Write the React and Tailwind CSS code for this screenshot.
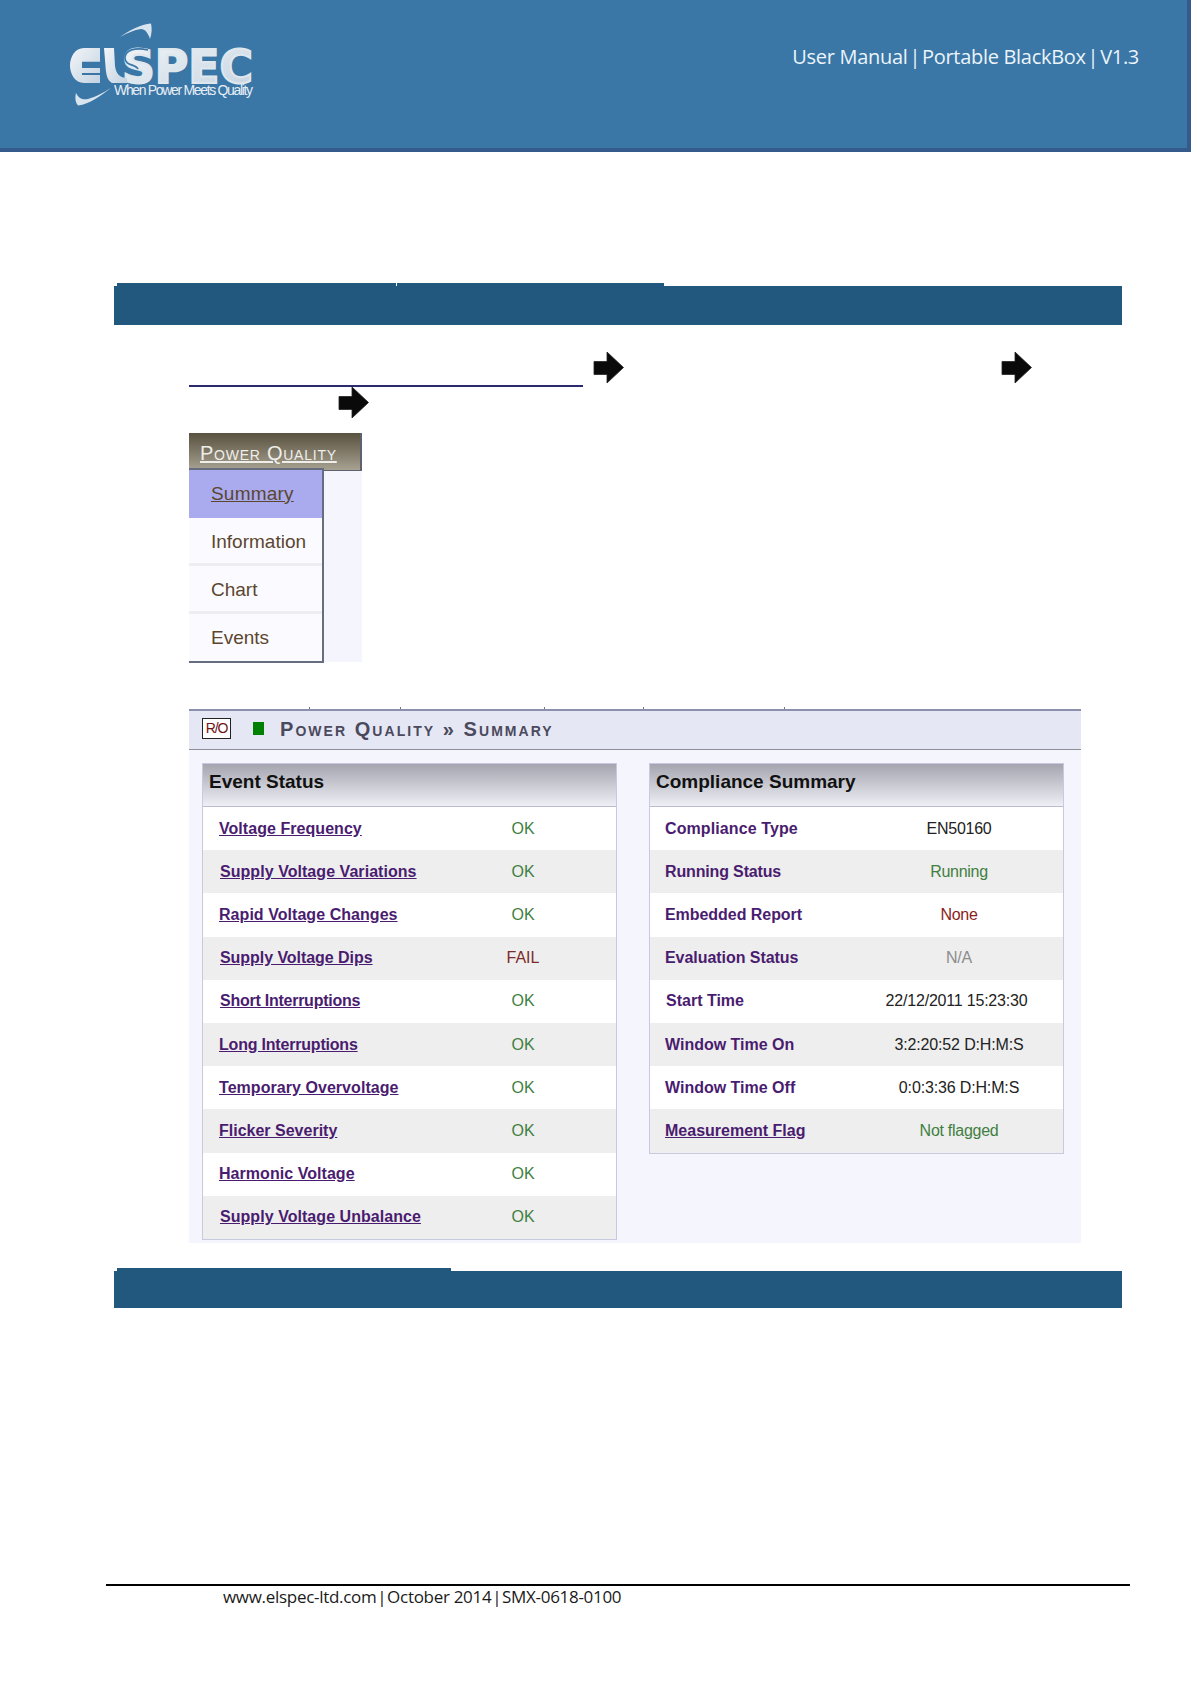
const sans = "font-['Liberation_Sans',Arial,sans-serif]";

const Arrow = ({ className = "" }) => (
  <svg viewBox="0 0 31 33" className={`w-[31px] h-[33px] shrink-0 ${className}`}>
    <path d="M1 10.5H14V1L30.5 16.5L14 32V23.5H1Z" fill="#0a0a0a" stroke="#222" strokeWidth="0.8" strokeLinejoin="round" />
  </svg>
);

const Logo = () => (
  <svg viewBox="68 22 190 88" className="w-[190px] h-[88px] shrink-0 overflow-visible">
    <defs>
      <linearGradient id="lg" x1="0" y1="0" x2="1" y2="1">
        <stop offset="0" stopColor="#f2f5f8" />
        <stop offset="1" stopColor="#c4d3e1" />
      </linearGradient>
    </defs>
    <path d="M120 37C128 31 141 24 151 23.5C152 28 152 33 150 39C148 33 145 29 141 29C134 30 127 33 120 37Z" fill="#d8e4ee" />
    <path d="M111 88C100 96 90 104 78 105.5C75 102 75 97 76 93C79 99 83 100 88 99C96 97 104 92 111 88Z" fill="#d8e4ee" />
    <path d="M100 48H84C75 48 70 57 70 65.5C70 74 75 83 84 83H100V75H82V73H100V68H82V63H100Z" fill="url(#lg)" />
    <path d="M82 62.5H100M82 74H100" stroke="#3a76a6" strokeWidth="1.5" />
    <text x="122" y="83" textLength="131" lengthAdjust="spacingAndGlyphs" fill="url(#lg)" stroke="#dfe7ee" strokeWidth="2" className="font-['DejaVu_Sans',sans-serif] font-bold text-[46px]">SPEC</text>
    <path d="M104 48H114L115 66C116 74 120 78 127 78V83H112C107 80 106 74 105.5 66Z" fill="url(#lg)" />
    <path d="M148 50C135 47 125 50 125 58C125 66 136 64 138 69" fill="none" stroke="#3a76a6" strokeWidth="1.6" />
    <text x="114" y="95" textLength="139" lengthAdjust="spacing" fill="#e6eef5" className={`${sans} text-[14px]`}>When Power Meets Quality</text>
  </svg>
);

const SectionBar = ({ stripWidth, nick, h, className = "" }) => (
  <div className={`ml-[114px] w-[1008px] ${className}`}>
    <div className="ml-[3px] h-[3px] bg-[#22577e] flex" style={{ width: stripWidth }}>
      {nick && <div className="ml-[279px] w-px bg-white" />}
    </div>
    <div className={`${h} bg-[#22577e]`} />
  </div>
);

const MenuItem = ({ label, active, last }) => (
  <div className={`pl-[22px] flex items-center text-[19px] text-[#5b4630] ${last ? "h-[47px] pt-[1px]" : "h-[48px]"} ${active ? "bg-[#aaaaee] underline tracking-[0.2px]" : ""} ${last || active ? "" : "border-b-[3px] border-[#eeeef2] pt-[3px]"}`}>
    {label}
  </div>
);

const event = [
  ["Voltage Frequency", "OK", 0, "tracking-[0.05px]"],
  ["Supply Voltage Variations", "OK", 1, "tracking-[0.05px]"],
  ["Rapid Voltage Changes", "OK", 0, "tracking-[0.05px]"],
  ["Supply Voltage Dips", "FAIL", 1, "tracking-[-0.05px]"],
  ["Short Interruptions", "OK", 1, "tracking-[-0.25px]"],
  ["Long Interruptions", "OK", 0, "tracking-[-0.2px]"],
  ["Temporary Overvoltage", "OK", 0, "tracking-[0.05px]"],
  ["Flicker Severity", "OK", 0, "tracking-normal"],
  ["Harmonic Voltage", "OK", 0, "tracking-[0.05px]"],
  ["Supply Voltage Unbalance", "OK", 1, "tracking-[0.05px]"],
];

const compliance = [
  ["Compliance Type", "EN50160", "text-[#222] tracking-[-0.28px]", false, 0, "tracking-[0.1px]"],
  ["Running Status", "Running", "text-[#3f7f3f] tracking-[-0.28px]", false, 0, "tracking-[-0.15px]"],
  ["Embedded Report", "None", "text-[#8a1c1c] tracking-[-0.28px]", false, 0, "tracking-[-0.05px]"],
  ["Evaluation Status", "N/A", "text-[#8c8c8c] tracking-[-0.28px]", false, 0, "tracking-[-0.05px]"],
  ["Start Time", "22/12/2011 15:23:30", "text-[#222] tracking-[-0.2px] pr-[5px]", false, 1, "tracking-normal"],
  ["Window Time On", "3:2:20:52 D:H:M:S", "text-[#222] tracking-[-0.15px]", false, 0, "tracking-normal"],
  ["Window Time Off", "0:0:3:36 D:H:M:S", "text-[#222] tracking-[-0.15px]", false, 0, "tracking-normal"],
  ["Measurement Flag", "Not flagged", "text-[#3f7f3f] tracking-[-0.28px]", true, 0, "tracking-normal"],
];

const Row = ({ i, label, value, valueClass, link, shift, labelW, pad, track }) => (
  <div className={`h-[43.2px] flex items-center text-[16px] ${i % 2 ? "bg-[#eeeeee]" : "bg-white"}`}>
    <div className={`${pad} shrink-0`} style={{ width: labelW }}>
      <span className={`font-bold text-[#4a1c70] ${track} ${link ? "underline" : ""}`} style={{ marginLeft: shift }}>{label}</span>
    </div>
    <div className={`w-[100px] flex justify-center ${valueClass}`}>
      <span className="shrink-0">{value}</span>
    </div>
  </div>
);

const Panel = ({ title, children }) => (
  <div className="w-[415px] border border-[#c6c9e0] self-start">
    <div className="h-[43px] pl-[6px] pb-[5px] flex items-center text-[19px] font-bold text-[#111] bg-gradient-to-b from-[#a4a5af] to-[#eff0f6] border-b border-[#b9bccf]">
      {title}
    </div>
    {children}
  </div>
);

export default function App() {
  return (
    <div className={`relative w-[1191px] h-[1684px] bg-white overflow-hidden flex flex-col ${sans}`}>
      <header className="h-[152px] shrink-0 bg-[#3a76a6] border-b-4 border-r-4 border-[#355b8c] flex justify-between pl-[68px] pr-[48px] pt-[22px]">
        <Logo />
        <div className="font-['Open_Sans',sans-serif] text-[20px] tracking-[-0.3px] text-[#eaf4fb] mt-[21px] leading-[28px] whitespace-pre">
          User Manual<span className="-mx-[3px]"> | </span>Portable BlackBox<span className="-mx-[3px]"> | </span>V1.3
        </div>
      </header>

      <SectionBar stripWidth={547} nick h="h-[39px]" className="mt-[131px]" />

      <div className="ml-[189px] mt-[26px]">
        <div className="flex">
          <div className="w-[394px] h-[36px] border-b-2 border-[#2a2a6e]" />
          <Arrow className="ml-[10px]" />
          <Arrow className="ml-[377px]" />
        </div>
        <Arrow className="ml-[149px] -mt-[1px]" />

        <div className="mt-[14px] w-[173px] h-[229px] bg-[#f5f5fd]">
          <div className="h-[38px] pl-[11px] pt-[5px] bg-gradient-to-b from-[#5a5240] to-[#a8a292] border-r-2 border-b border-[#5e6270] text-[#eeeeea] text-[20px] tracking-[0.75px] underline [font-variant:small-caps]">
            Power Quality
          </div>
          <div className="-mt-[3px] w-[135px] border-t-2 border-r-2 border-b-2 border-[#676d80] bg-[#fbfbff]">
            <MenuItem label="Summary" active />
            <MenuItem label="Information" />
            <MenuItem label="Chart" />
            <MenuItem label="Events" last />
          </div>
        </div>

        <div className="mt-[45px] w-[892px] h-[536px] bg-[#f5f5fd]">
          <div className="h-[2px] bg-white flex">
            <div className="ml-[120px] w-px bg-[#777]" />
            <div className="ml-[90px] w-px bg-[#777]" />
            <div className="ml-[143px] w-px bg-[#777]" />
            <div className="ml-[98px] w-px bg-[#777]" />
            <div className="ml-[140px] w-px bg-[#777]" />
          </div>
          <div className="h-[41px] flex items-center bg-[#e6e7f5] border-t-2 border-b border-t-[#8a90ad] border-b-[#8e8e98] pl-[13px] pb-[3px]">
            <div className="w-[29px] h-[21px] border border-[#222] bg-white text-[14px] tracking-[-1.2px] text-[#6e1414] flex items-center justify-center">R/O</div>
            <div className="ml-[22px] w-[11px] h-[13px] bg-[#008000]" />
            <div className="ml-[16px] text-[20px] font-bold tracking-[2.05px] text-[#4a4a5c] [font-variant:small-caps]">Power Quality » Summary</div>
          </div>
          <div className="mt-[13px] px-[13px] flex gap-[32px]">
            <Panel title="Event Status">
              {event.map(([l, v, s, t], i) => (
                <Row key={l} i={i} label={l} value={v} link shift={s} track={t} pad="pl-[16px]" labelW={270} valueClass={v === "FAIL" ? "text-[#7d2a2a]" : "text-[#3f7f3f]"} />
              ))}
            </Panel>
            <Panel title="Compliance Summary">
              {compliance.map(([l, v, c, link, s, t], i) => (
                <Row key={l} i={i} label={l} value={v} valueClass={c} link={link} shift={s} track={t} pad="pl-[15px]" labelW={259} />
              ))}
            </Panel>
          </div>
        </div>
      </div>

      <SectionBar stripWidth={334} h="h-[37px]" className="mt-[25px]" />

      <footer className="mt-auto mb-[78px] ml-[106px] w-[1024px] border-t-2 border-black pl-[117px] pt-[1px] font-['Open_Sans',sans-serif] text-[17px] tracking-[-0.3px] leading-[19px] text-[#1a1a1a] whitespace-pre">
        www.elspec-ltd.com<span className="-mx-[3.3px]"> | </span>October 2014<span className="-mx-[3.3px]"> | </span>SMX-0618-0100
      </footer>
    </div>
  );
}
